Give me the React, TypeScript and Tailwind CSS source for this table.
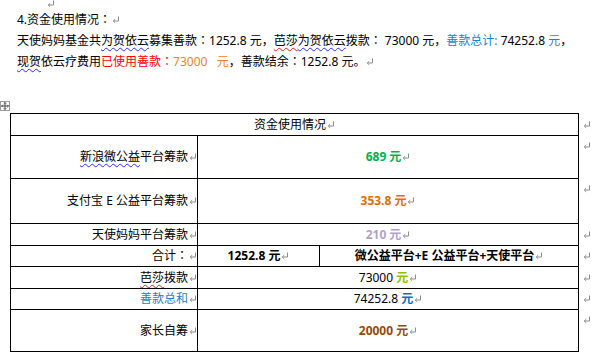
import React from "react";

// Word-style pilcrow (paragraph mark)
function Mark() {
  return (
    <svg width="8" height="8" viewBox="0 0 8 8" className="inline-block ml-[1px] align-[0px]">
      <path d="M6.5 0.5 V5 H1.5 M3.2 3.2 L1.2 5 L3.2 6.8" fill="none" stroke="#8c8c8c" strokeWidth="1" />
    </svg>
  );
}

function Wavy({ red, children }: { red?: boolean; children: React.ReactNode }) {
  return (
    <span
      className={
        red
          ? "underline decoration-wavy decoration-[#e02020] decoration-1 underline-offset-[2px]"
          : "underline decoration-wavy decoration-[#2a2aff] decoration-1 underline-offset-[2px]"
      }
    >
      {children}
    </span>
  );
}

const cell = "border border-black p-0 align-middle";

export default function App() {
  return (
    <div className="relative w-[600px] h-[354px] overflow-hidden bg-white text-black font-['Noto_Sans','Noto_Sans_CJK_JP',sans-serif] text-[12px]">
      {/* paragraph mark peeking from the line above */}
      <div className="absolute left-[46px] top-[-5px]">
        <Mark />
      </div>

      {/* Paragraph */}
      <div className="pt-[9px] pl-[17px] leading-[21px]">
        <div>
          4.资金使用情况：<Mark />
        </div>
        <div className="whitespace-nowrap">
          天使妈妈基金共<Wavy>为贺依云</Wavy>募集善款：1252.8 元，<Wavy red>芭莎</Wavy>
          <Wavy>为贺依云</Wavy>拨款： 73000 元，<span className="text-[#1a7fd0]">善款总计:</span> 74252.8{" "}
          <span className="text-[#1a7fd0]">元</span>，
        </div>
        <div className="whitespace-nowrap">
          <Wavy>现贺</Wavy>依云疗费用<span className="text-[#ff0000]">已使用善款：</span>
          <span className="text-[#f07f2e]">73000 &nbsp;&nbsp;元</span>，善款结余：1252.8 元。<Mark />
        </div>
      </div>

      {/* Table move handle */}
      <div className="absolute left-0 top-[101px] w-[10px] h-[10px] border border-[#9a9a9a] bg-white flex items-center justify-center">
        <svg width="8" height="8" viewBox="0 0 8 8">
          <path d="M4 0.5 V7.5 M0.5 4 H7.5 M2.8 1.7 L4 0.5 L5.2 1.7 M2.8 6.3 L4 7.5 L5.2 6.3 M1.7 2.8 L0.5 4 L1.7 5.2 M6.3 2.8 L7.5 4 L6.3 5.2" fill="none" stroke="#333" strokeWidth="0.9" />
        </svg>
      </div>

      {/* Table */}
      <table className="ml-[10px] mt-[41px] border-collapse table-fixed w-[590px] leading-[18px]">
        <colgroup>
          <col className="w-[187px]" />
          <col className="w-[122px]" />
          <col className="w-[259px]" />
          <col className="w-[22px]" />
        </colgroup>
        <tbody>
          <tr className="h-[22px]">
            <td colSpan={3} className={`${cell} text-center`}>
              资金使用情况<Mark />
            </td>
            <td className="align-middle pl-[3px]"><Mark /></td>
          </tr>
          <tr className="h-[43px]">
            <td className={`${cell} text-right`}>
              <Wavy>新浪微公益</Wavy>平台筹款<Mark />
            </td>
            <td colSpan={2} className={`${cell} font-bold text-center text-[#00b050]`}>
              689 元<Mark />
            </td>
            <td className="align-top pl-[3px] pt-[1px]"><Mark /></td>
          </tr>
          <tr className="h-[45px]">
            <td className={`${cell} text-right`}>
              支付宝 E 公益平台筹款<Mark />
            </td>
            <td colSpan={2} className={`${cell} font-bold text-center text-[#e36c09]`}>
              353.8 元<Mark />
            </td>
            <td className="align-top pl-[3px] pt-[1px]"><Mark /></td>
          </tr>
          <tr className="h-[22px]">
            <td className={`${cell} text-right`}>
              天使妈妈平台筹款<Mark />
            </td>
            <td colSpan={2} className={`${cell} font-bold text-center text-[#b2a1c7]`}>
              210 元<Mark />
            </td>
            <td className="align-middle pl-[3px]"><Mark /></td>
          </tr>
          <tr className="h-[21px]">
            <td className={`${cell} text-right`}>
              合计：<Mark />
            </td>
            <td className={`${cell} font-bold text-center`}>
              1252.8 元<Mark />
            </td>
            <td className={`${cell} font-bold text-center`}>
              微公益平台+E 公益平台+天使平台<Mark />
            </td>
            <td className="align-middle pl-[3px]"><Mark /></td>
          </tr>
          <tr className="h-[22px]">
            <td className={`${cell} text-right`}>
              <Wavy red>芭莎</Wavy>拨款<Mark />
            </td>
            <td colSpan={2} className={`${cell} text-center`}>
              73000 <span className="font-bold text-[#92c000]">元</span>
              <Mark />
            </td>
            <td className="align-middle pl-[3px]"><Mark /></td>
          </tr>
          <tr className="h-[21px]">
            <td className={`${cell} text-right text-[#1a7fd0]`}>
              善款总和<Mark />
            </td>
            <td colSpan={2} className={`${cell} text-center`}>
              74252.8 <span className="font-bold text-[#0070c0]">元</span>
              <Mark />
            </td>
            <td className="align-middle pl-[3px]"><Mark /></td>
          </tr>
          <tr className="h-[42px]">
            <td className={`${cell} text-right`}>
              家长自筹<Mark />
            </td>
            <td colSpan={2} className={`${cell} font-bold text-center text-[#984806]`}>
              20000 元<Mark />
            </td>
            <td className="align-top pl-[3px] pt-[1px]"><Mark /></td>
          </tr>
        </tbody>
      </table>
    </div>
  );
}
